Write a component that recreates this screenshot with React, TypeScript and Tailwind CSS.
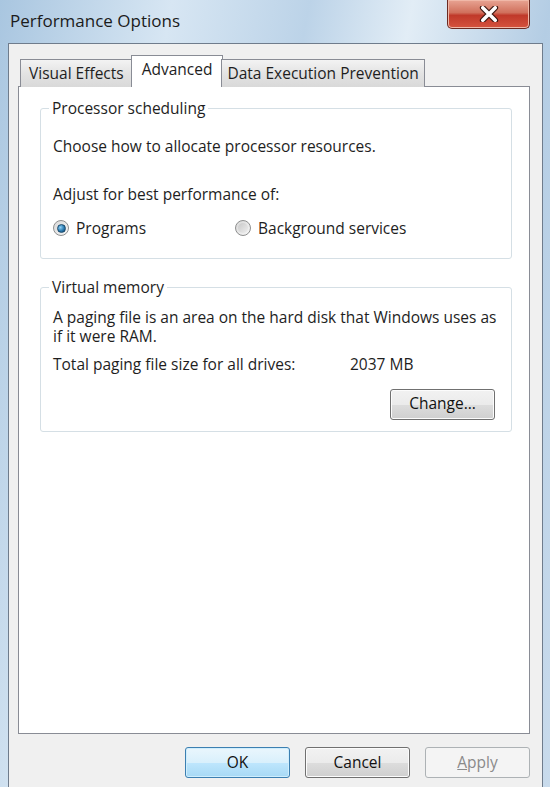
import React from "react";

const font = { fontFamily: '"Open Sans", "Noto Sans", sans-serif' };

function Radio({ checked, label }: { checked?: boolean; label: string }) {
  return (
    <label className="flex items-center gap-[7px]">
      <span className="relative flex h-[16px] w-[16px] items-center justify-center rounded-full border border-[#8e8f8f] bg-gradient-to-br from-[#d8d8d8] to-[#f7f7f7]">
        {checked ? (
          <span className="h-[9px] w-[9px] rounded-full border border-[#1a4b6d] bg-[radial-gradient(circle_at_35%_35%,#8fd0f5,#2a7ab0_55%,#0f3e63)]" />
        ) : (
          <span className="h-[10px] w-[10px] rounded-full bg-gradient-to-br from-[#c9c9c9] to-[#eeeeee]" />
        )}
      </span>
      <span>{label}</span>
    </label>
  );
}

function GroupBox({
  title,
  className,
  children,
}: {
  title: string;
  className?: string;
  children: React.ReactNode;
}) {
  return (
    <fieldset className={`rounded-[3px] border border-[#d5dfe5] px-[12px] pt-0 ${className ?? ""}`}>
      <legend className="ml-[-4px] px-[3px] text-[#1e1e1e]">{title}</legend>
      {children}
    </fieldset>
  );
}

function Button({ label, kind }: { label: React.ReactNode; kind?: "default" | "disabled" }) {
  const base = "h-[31px] w-[105px] rounded-[3px] border text-[15.5px]";
  if (kind === "default")
    return (
      <button className={`${base} border-[#3c7fb1] bg-[linear-gradient(#eaf6fd_0%,#d9f0fc_50%,#bee6fd_51%,#a7d9f5_100%)] text-[#111] shadow-[inset_0_0_0_1px_#cfeefd]`}>
        {label}
      </button>
    );
  if (kind === "disabled")
    return (
      <button className={`${base} border-[#adb2b5] bg-[#f4f4f4] text-[#8a8a8a]`}>{label}</button>
    );
  return (
    <button className={`${base} border-[#707070] bg-[linear-gradient(#f2f2f2_0%,#ebebeb_50%,#dddddd_51%,#cfcfcf_100%)] text-[#111] shadow-[inset_0_0_0_1px_#fcfcfc]`}>
      {label}
    </button>
  );
}

export default function App() {
  return (
    <div
      style={font}
      className="flex h-[787px] w-[550px] flex-col overflow-hidden bg-[linear-gradient(100deg,#a9c6e0_0%,#d7e6f3_25%,#bcd3e8_45%,#e2edf6_60%,#b4cde4_80%,#c9dbec_100%)] text-[15.5px] text-[#1e1e1e]"
    >
      {/* title bar */}
      <div className="flex h-[43px] shrink-0 items-start justify-between">
        <div className="pl-[10px] pt-[8px] text-[17px] text-[#1b1b1b]">Performance Options</div>
        <div className="mr-[20px] flex h-[29px] w-[83px] items-center justify-center rounded-b-[5px] border border-t-0 border-[#6b2a22] bg-[linear-gradient(#e8a493_0%,#d0705c_45%,#c0392a_55%,#d5533e_100%)] shadow-[inset_0_0_0_1px_#f0b8a8]">
          <svg width="20" height="16" viewBox="0 0 22 18">
            <path
              d="M4 2 L18 16 M18 2 L4 16"
              stroke="#3a1610"
              strokeWidth="6.5"
              strokeLinecap="round"
            />
            <path
              d="M4 2 L18 16 M18 2 L4 16"
              stroke="#ffffff"
              strokeWidth="4"
              strokeLinecap="round"
            />
          </svg>
        </div>
      </div>

      {/* client */}
      <div className="ml-[8px] mr-[7px] flex flex-1 flex-col border-l border-r border-t border-[#6f7c8c] bg-[#f0f0f0]">
        <div className="ml-[9px] mr-[12px] mt-[11px] flex flex-1 flex-col">
          {/* tabs */}
          <div className="relative z-10 flex h-[31px] items-end pl-[2px]">
            <div className="mb-[-1px] flex h-[28px] items-center border border-b-0 border-[#898c95] bg-[linear-gradient(#f3f3f3,#e3e3e3_50%,#d9d9d9)] px-[8px]">
              Visual Effects
            </div>
            <div className="mx-[-2px] mb-[-1px] flex h-[32px] items-start border border-b-0 border-[#898c95] bg-white px-[10px] pt-[2px]">
              Advanced
            </div>
            <div className="mb-[-1px] flex h-[28px] items-center border border-b-0 border-[#898c95] bg-[linear-gradient(#f3f3f3,#e3e3e3_50%,#d9d9d9)] px-[5px]">
              Data Execution Prevention
            </div>
          </div>

          {/* panel */}
          <div className="flex h-[648px] flex-col gap-[17px] border border-[#898c95] bg-white pl-[21px] pr-[17px] pt-[10px]">
            <GroupBox title="Processor scheduling" className="pb-[18px]">
              <div className="pt-[15px]">Choose how to allocate processor resources.</div>
              <div className="pt-[24px]">Adjust for best performance of:</div>
              <div className="flex pt-[11px]">
                <div className="w-[182px]">
                  <Radio checked label="Programs" />
                </div>
                <Radio label="Background services" />
              </div>
            </GroupBox>

            <GroupBox title="Virtual memory" className="pb-[11px]">
              <div className="pt-[9px] leading-[19px]">
                A paging file is an area on the hard disk that Windows uses as if it were RAM.
              </div>
              <div className="flex pt-[7px]">
                <div className="w-[297px]">Total paging file size for all drives:</div>
                <div>2037 MB</div>
              </div>
              <div className="flex justify-end pr-[4px] pt-[12px]">
                <Button label="Change..." />
              </div>
            </GroupBox>
          </div>

          {/* bottom buttons */}
          <div className="flex justify-end gap-[15px] pt-[13px]">
            <Button kind="default" label="OK" />
            <Button label="Cancel" />
            <Button
              kind="disabled"
              label={
                <>
                  <span className="underline">A</span>pply
                </>
              }
            />
          </div>
        </div>
      </div>
    </div>
  );
}
